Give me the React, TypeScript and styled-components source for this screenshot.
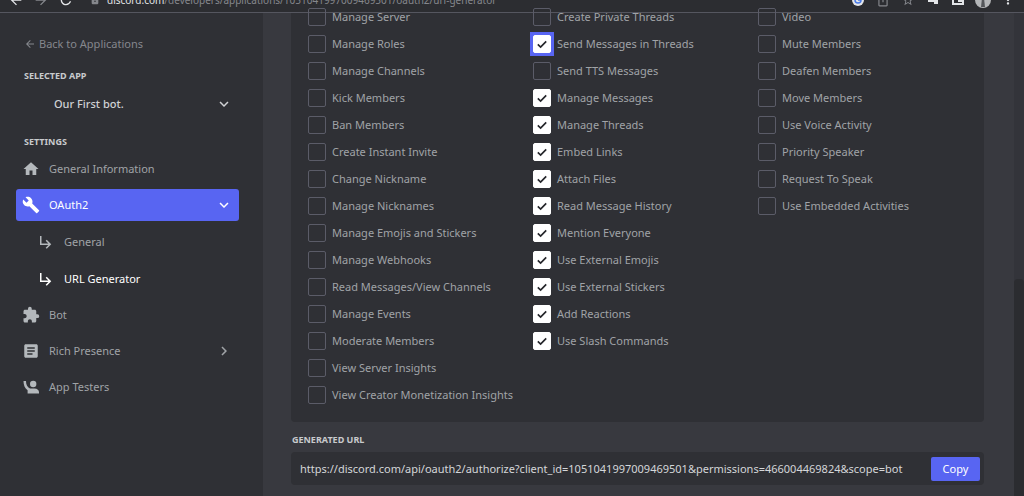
import React from "react";
import styled, { createGlobalStyle, css } from "styled-components";
import {
  MdHome,
  MdBuild,
  MdExtension,
  MdSubdirectoryArrowRight,
  MdArticle,
  MdArrowBack,
  MdArrowForward,
  MdKeyboardArrowDown,
  MdChevronRight,
  MdRefresh,
  MdLock,
  MdStarBorder,
  MdIosShare,
  MdMoreVert,
} from "react-icons/md";

const GlobalStyle = createGlobalStyle`
  *, *::before, *::after { box-sizing: border-box; }
  html, body { margin: 0; height: 100%; }
  body {
    background: #38393f;
    color: #a0a3a7;
    font-family: "Noto Sans", "Open Sans", sans-serif;
    font-size: 11px;
    line-height: 16px;
    overflow: hidden;
  }
  #root { height: 100%; }
  button, input { font: inherit; color: inherit; }
  a { color: inherit; text-decoration: none; }
`;

const Window = styled.div`
  display: flex;
  flex-direction: column;
  height: 100%;
`;

const BrowserBar = styled.header`
  flex: none;
  height: 13px;
  display: flex;
  align-items: flex-end;
  overflow: hidden;
  background: #2c2d31;
  border-bottom: 1px solid #55565f;
  color: #e3e5e8;
`;

const BarGroup = styled.div`
  display: flex;
  align-items: center;
  height: 24px;
  gap: 9px;
  padding: 0 8px;
`;

const BarButton = styled.button<{ $dim?: boolean }>`
  display: flex;
  justify-content: center;
  width: 16px;
  padding: 0;
  border: 0;
  background: none;
  color: ${(p) => (p.$dim ? "#85878c" : "#e3e5e8")};
`;

const Address = styled.div`
  flex: 1;
  display: flex;
  align-items: center;
  gap: 7px;
  height: 24px;
  padding-left: 8px;
  color: #85878c;
  font-size: 10px;
  white-space: nowrap;
`;

const Host = styled.span`
  color: #e3e5e8;
`;

const Body = styled.div`
  flex: 1;
  min-height: 0;
  display: flex;
`;

const Sidebar = styled.nav`
  flex: none;
  width: 263px;
  padding: 22px 24px 0 16px;
  background: #2f3035;
`;

const BackLink = styled.a`
  display: flex;
  align-items: center;
  gap: 3px;
  height: 18px;
  padding-left: 8px;
  color: #85878d;
`;

const Heading = styled.h2`
  margin: 0;
  font-size: 9px;
  line-height: 16px;
  font-weight: 700;
  color: #c8cacd;
  text-transform: uppercase;
`;

const AppHeading = styled(Heading)`
  padding: 15px 8px 0;
`;

const SettingsHeading = styled(Heading)`
  padding: 10px 8px 0;
`;

const AppPicker = styled.button`
  display: flex;
  align-items: center;
  justify-content: space-between;
  width: 100%;
  height: 40px;
  padding: 0 6px 0 38px;
  border: 0;
  background: none;
  color: #d0d2d5;
  font-weight: 500;
`;

const NavList = styled.ul`
  list-style: none;
  margin: 0;
  padding: 3px 0 0;
  display: flex;
  flex-direction: column;
  gap: 4px;
`;

const NavLink = styled.a<{ $active?: boolean; $sub?: boolean }>`
  display: flex;
  align-items: center;
  gap: 9px;
  height: ${(p) => (p.$sub ? 33 : 32)}px;
  padding: 0 6px;
  border-radius: 3px;
  ${(p) =>
    p.$sub &&
    css`
      padding-left: 21px;
    `}
  ${(p) =>
    p.$active &&
    css`
      color: #fff;
      background: ${p.$sub ? "none" : "#5865f2"};
    `}
`;

const NavIcon = styled.span<{ $active?: boolean }>`
  display: flex;
  color: ${(p) => (p.$active ? "#fff" : "#b4b8bc")};
`;

const NavText = styled.span`
  flex: 1;
`;

const Content = styled.main`
  flex: 1;
  min-width: 0;
  padding: 0 30px 0 28px;
`;

const Permissions = styled.section`
  display: grid;
  grid-template-columns: repeat(3, 1fr);
  padding: 0 1px 14px 17px;
  margin-bottom: 10px;
  background: #2f3035;
  border-radius: 0 0 4px 4px;
`;

const PermissionColumn = styled.div`
  display: flex;
  flex-direction: column;
  margin-top: -10px;
`;

const PermissionLabel = styled.label`
  display: flex;
  align-items: center;
  gap: 6px;
  height: 27px;
  white-space: nowrap;
`;

const BoxFrame = styled.span<{ $focused?: boolean }>`
  display: grid;
  flex: none;
  width: 18px;
  height: 18px;
  > * {
    grid-area: 1 / 1;
  }
  ${(p) =>
    p.$focused &&
    css`
      background: #5865f2;
      outline: 3px solid #5865f2;
    `}
`;

const Box = styled.input`
  appearance: none;
  width: 18px;
  height: 18px;
  margin: 0;
  border: 1px solid #5b5c68;
  border-radius: 2px;
  &:checked {
    background: #fff;
    border-color: #fff;
  }
`;

const Tick = styled.svg`
  width: 18px;
  height: 18px;
  pointer-events: none;
`;

const UrlLabel = styled(Heading)`
  display: block;
  padding-left: 1px;
`;

const UrlRow = styled.div`
  display: flex;
  align-items: center;
  height: 33px;
  margin-top: 4px;
  padding: 0 4px 0 9px;
  background: #2f3035;
  border-radius: 4px;
`;

const UrlField = styled.input`
  flex: 1;
  min-width: 0;
  padding: 0;
  border: 0;
  outline: 0;
  background: none;
  color: #d4d6d9;
`;

const CopyButton = styled.button`
  width: 49px;
  height: 24px;
  padding: 0;
  border: 0;
  border-radius: 2px;
  background: #5865f2;
  color: #fff;
`;

const ScrollTrack = styled.div`
  flex: none;
  width: 10px;
  padding-top: 266px;
  background: #33343a;
`;

const ScrollThumb = styled.div`
  height: 100%;
  background: #2b2c30;
  border-radius: 4px 4px 0 0;
`;

type Permission = { name: string; on?: boolean; focused?: boolean };

const off = (...names: string[]): Permission[] => names.map((name) => ({ name }));
const on = (...names: string[]): Permission[] => names.map((name) => ({ name, on: true }));

const columns: Permission[][] = [
  off(
    "Manage Server",
    "Manage Roles",
    "Manage Channels",
    "Kick Members",
    "Ban Members",
    "Create Instant Invite",
    "Change Nickname",
    "Manage Nicknames",
    "Manage Emojis and Stickers",
    "Manage Webhooks",
    "Read Messages/View Channels",
    "Manage Events",
    "Moderate Members",
    "View Server Insights",
    "View Creator Monetization Insights",
  ),
  [
    ...off("Create Private Threads"),
    { name: "Send Messages in Threads", on: true, focused: true },
    ...off("Send TTS Messages"),
    ...on(
      "Manage Messages",
      "Manage Threads",
      "Embed Links",
      "Attach Files",
      "Read Message History",
      "Mention Everyone",
      "Use External Emojis",
      "Use External Stickers",
      "Add Reactions",
      "Use Slash Commands",
    ),
  ],
  off(
    "Video",
    "Mute Members",
    "Deafen Members",
    "Move Members",
    "Use Voice Activity",
    "Priority Speaker",
    "Request To Speak",
    "Use Embedded Activities",
  ),
];

function PermissionItem({ name, on: checked, focused }: Permission) {
  return (
    <PermissionLabel>
      <BoxFrame $focused={focused}>
        <Box type="checkbox" defaultChecked={checked} />
        {checked && (
          <Tick viewBox="0 0 18 18" fill="none" stroke="#24252a" strokeWidth="1.7">
            <path d="M4.8 9.4 L7.6 12 L13.2 6.4" />
          </Tick>
        )}
      </BoxFrame>
      {name}
    </PermissionLabel>
  );
}

const TesterIcon = () => (
  <svg width="18" height="18" viewBox="0 0 18 18" fill="currentColor" aria-hidden="true">
    <circle cx="11.2" cy="6" r="3.2" />
    <path d="M1.5 3 H4 C4 6.6 5.2 9.2 8 10.4 H12.4 C15.4 10.6 17 12 17 14.2 V15.6 H5.6 V12.2 C2.8 10.4 1.5 7 1.5 3 Z" />
  </svg>
);

const SearchEngineIcon = () => (
  <svg width="12" height="12" viewBox="0 0 12 12" aria-hidden="true">
    <circle cx="6" cy="6" r="6" fill="#e3e5e8" />
    <path d="M6 3 A3 3 0 1 0 9 6 H6" fill="none" stroke="#4a7be8" strokeWidth="1.5" />
  </svg>
);

const PiecesIcon = () => (
  <svg width="14" height="14" viewBox="0 0 14 14" fill="currentColor" aria-hidden="true">
    <path d="M2 5 H7 V3 H10 V5 H12 V11 H8 V9 H2 Z" />
  </svg>
);

const SidePanelIcon = () => (
  <svg width="12" height="12" viewBox="0 0 12 12" aria-hidden="true">
    <rect x="1" y="1" width="10" height="9" fill="none" stroke="currentColor" strokeWidth="2" />
    <rect x="6" y="1" width="5" height="7" fill="currentColor" />
  </svg>
);

const AvatarIcon = () => (
  <svg width="16" height="16" viewBox="0 0 16 16" aria-hidden="true">
    <circle cx="8" cy="8" r="8" fill="#b4b6b8" />
    <path d="M7 6 L9 6 L10 15 H6 Z" fill="#54565a" />
  </svg>
);

type NavEntry = {
  label: string;
  icon: React.ReactNode;
  active?: boolean;
  sub?: boolean;
  trailing?: React.ReactNode;
};

const nav: NavEntry[] = [
  { label: "General Information", icon: <MdHome size={18} /> },
  {
    label: "OAuth2",
    icon: <MdBuild size={18} />,
    active: true,
    trailing: <MdKeyboardArrowDown size={18} />,
  },
  { label: "General", icon: <MdSubdirectoryArrowRight size={18} />, sub: true },
  { label: "URL Generator", icon: <MdSubdirectoryArrowRight size={18} />, sub: true, active: true },
  { label: "Bot", icon: <MdExtension size={18} /> },
  { label: "Rich Presence", icon: <MdArticle size={18} />, trailing: <MdChevronRight size={18} /> },
  { label: "App Testers", icon: <TesterIcon /> },
];

export default function App() {
  return (
    <Window>
      <GlobalStyle />
      <BrowserBar>
        <BarGroup>
          <BarButton aria-label="Back"><MdArrowBack size={16} /></BarButton>
          <BarButton aria-label="Forward" $dim><MdArrowForward size={16} /></BarButton>
          <BarButton aria-label="Reload"><MdRefresh size={16} /></BarButton>
        </BarGroup>
        <Address>
          <MdLock size={10} />
          <span>
            <Host>discord.com</Host>/developers/applications/1051041997009469501/oauth2/url-generator
          </span>
        </Address>
        <BarGroup>
          <BarButton aria-label="Search"><SearchEngineIcon /></BarButton>
          <BarButton aria-label="Share" $dim><MdIosShare size={14} /></BarButton>
          <BarButton aria-label="Bookmark" $dim><MdStarBorder size={14} /></BarButton>
          <BarButton aria-label="Extensions"><PiecesIcon /></BarButton>
          <BarButton aria-label="Side panel"><SidePanelIcon /></BarButton>
          <BarButton aria-label="Profile"><AvatarIcon /></BarButton>
          <BarButton aria-label="Menu"><MdMoreVert size={14} /></BarButton>
        </BarGroup>
      </BrowserBar>
      <Body>
        <Sidebar>
          <BackLink href="#"><MdArrowBack size={12} />Back to Applications</BackLink>
          <AppHeading>Selected App</AppHeading>
          <AppPicker>Our First bot.<MdKeyboardArrowDown size={18} /></AppPicker>
          <SettingsHeading>Settings</SettingsHeading>
          <NavList>
            {nav.map((n) => (
              <li key={n.label}>
                <NavLink href="#" $active={n.active} $sub={n.sub}>
                  <NavIcon $active={n.active}>{n.icon}</NavIcon>
                  <NavText>{n.label}</NavText>
                  {n.trailing}
                </NavLink>
              </li>
            ))}
          </NavList>
        </Sidebar>
        <Content>
          <Permissions>
            {columns.map((items, i) => (
              <PermissionColumn key={i}>
                {items.map((p) => (
                  <PermissionItem key={p.name} {...p} />
                ))}
              </PermissionColumn>
            ))}
          </Permissions>
          <UrlLabel as="label" htmlFor="url">Generated URL</UrlLabel>
          <UrlRow>
            <UrlField
              id="url"
              readOnly
              value="https://discord.com/api/oauth2/authorize?client_id=1051041997009469501&permissions=466004469824&scope=bot"
            />
            <CopyButton>Copy</CopyButton>
          </UrlRow>
        </Content>
        <ScrollTrack><ScrollThumb /></ScrollTrack>
      </Body>
    </Window>
  );
}
